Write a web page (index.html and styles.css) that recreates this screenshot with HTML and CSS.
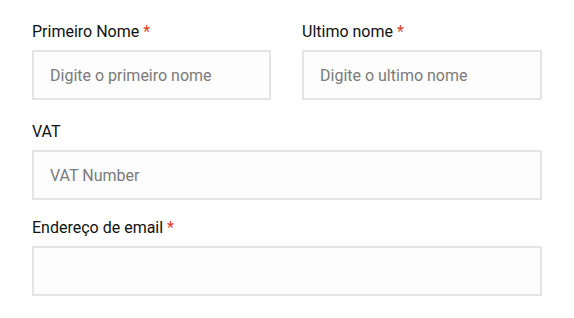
FILE: index.html
```html
<!DOCTYPE html>
<html lang="en">
<head>
    <meta charset="UTF-8">
    <meta name="viewport" content="width=device-width, initial-scale=1.0">
    <link rel="stylesheet" href="styles.css">
    <title>Registo</title>
</head>
<body>
    <form class="form">
        <div class="row">
            <div class="field">
                <label class="label" for="first">Primeiro Nome <span class="req">*</span></label>
                <input class="input" id="first" type="text" placeholder="Digite o primeiro nome">
            </div>
            <div class="field">
                <label class="label" for="last">Ultimo nome <span class="req">*</span></label>
                <input class="input" id="last" type="text" placeholder="Digite o ultimo nome">
            </div>
        </div>
        <div class="field field-vat">
            <label class="label" for="vat">VAT</label>
            <input class="input" id="vat" type="text" placeholder="VAT Number">
        </div>
        <div class="field">
            <label class="label" for="email">Endereço de email <span class="req">*</span></label>
            <input class="input" id="email" type="email">
        </div>
    </form>
</body>
</html>
```

FILE: styles.css
```css
body {
    font-family: 'Roboto', 'Liberation Sans', sans-serif;
    margin: 0;
    padding: 20px 32px;
    background-color: #fff;
    color: #111;
}

.form {
    width: 510px;
}

.row {
    display: grid;
    grid-template-columns: 239px 240px;
    column-gap: 31px;
    margin-bottom: 20px;
}

.field {
    display: flex;
    flex-direction: column;
}

.field-vat {
    margin-bottom: 16px;
}

.label {
    font-size: 16px;
    line-height: 24px;
    margin-bottom: 6px;
}

.req {
    color: #e2401c;
}

.input {
    box-sizing: border-box;
    height: 50px;
    width: 100%;
    margin: 0;
    padding: 0 16px;
    font-family: inherit;
    font-size: 16px;
    color: #333;
    background-color: #fdfdfd;
    border: 2px solid #e4e4e4;
    border-radius: 0;
    outline: none;
}

.input::placeholder {
    color: #7a7a7a;
}
```
